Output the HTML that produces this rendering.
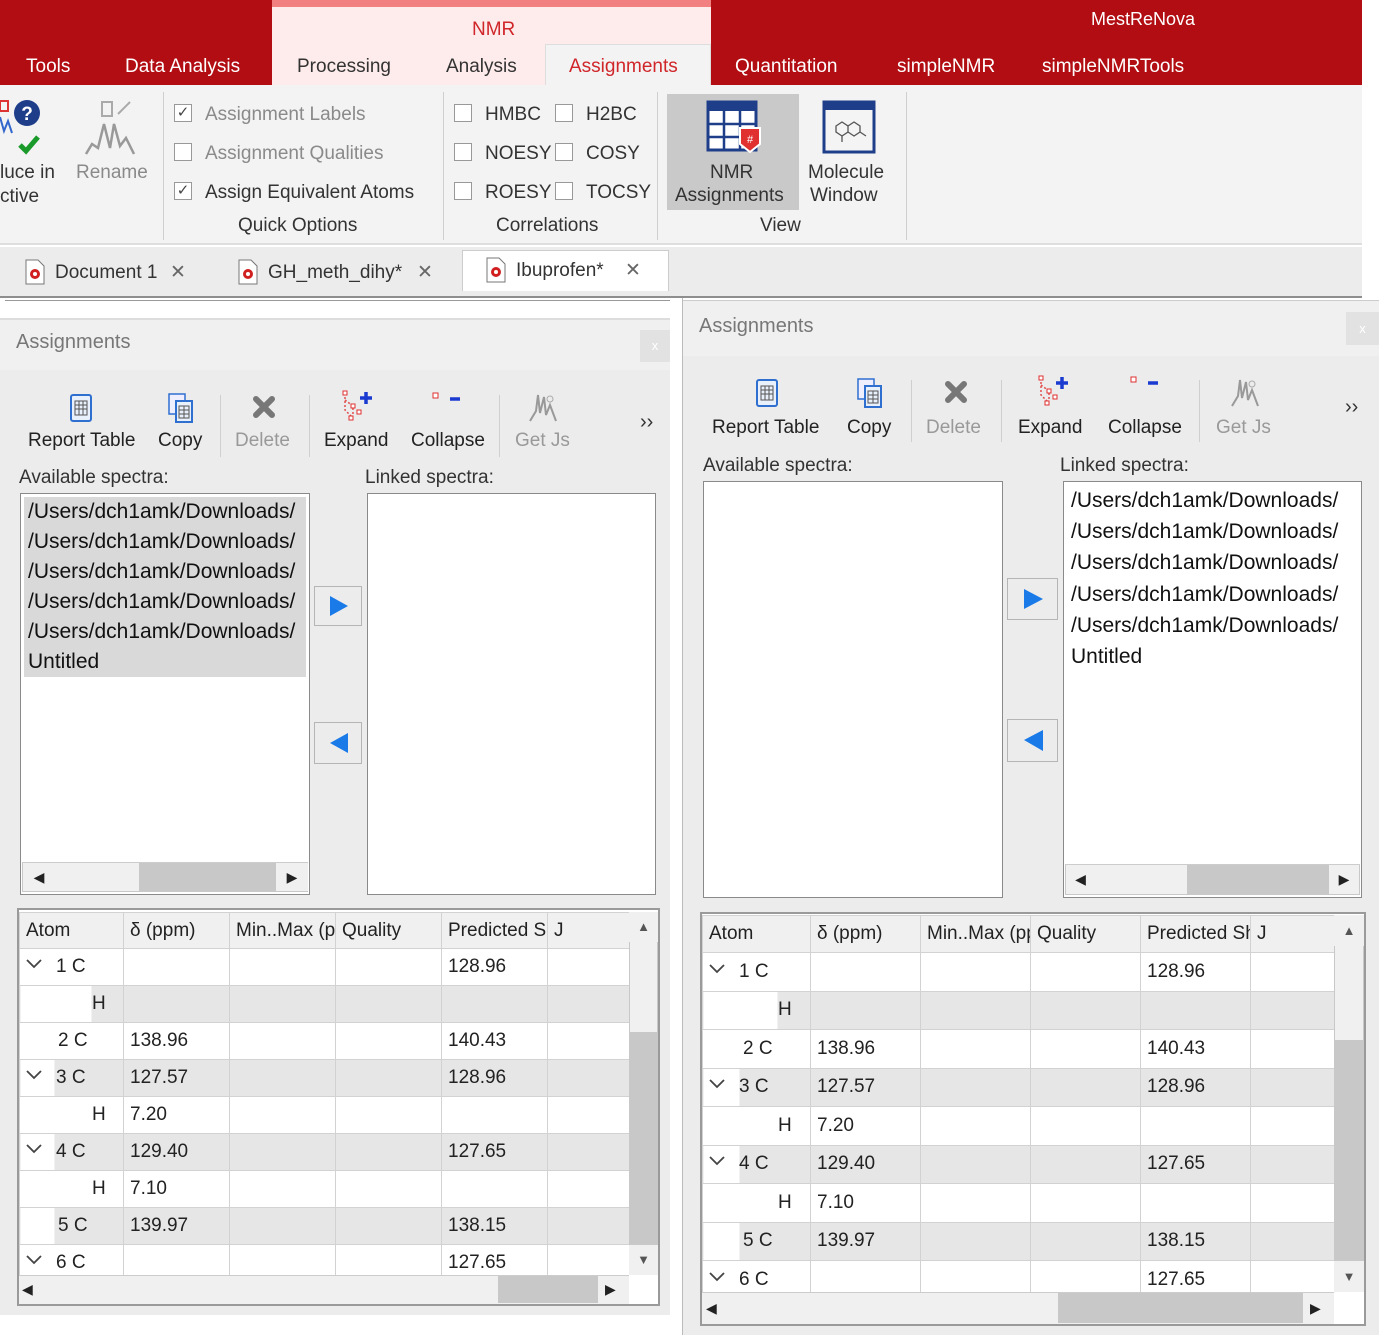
<!DOCTYPE html>
<html><head><meta charset="utf-8"><style>
*{box-sizing:border-box;margin:0;padding:0}
body{width:1379px;height:1335px;position:relative;overflow:hidden;background:#fff;font-family:"Liberation Sans",sans-serif;color:#222}
.a{position:absolute;white-space:nowrap}
.w{color:#fff;font-size:19px}
.g{color:#8a8a8a}
.cb{position:absolute;width:18px;height:18px;border:1px solid #999;background:#fff;font-size:15px;line-height:16px;text-align:center;color:#444}
.lbl{font-size:19px;line-height:22px}
.sep{position:absolute;width:1px;background:#cfcfcf}
.box{position:absolute;background:#fff;border:1px solid #8a8a8a}
.arr{position:absolute;background:#ececec;border:1px solid #b5b5b5}
table{border-collapse:collapse;table-layout:fixed;font-size:19px}
td{border:1px solid #d2d2d2;padding:0 0 0 6px;white-space:nowrap;overflow:hidden}
tr.h td{background:#f0f0f0}
tr.gr td{background:#e6e6e6}
.ch{display:inline-block;width:16px;height:10px;margin-right:14px;vertical-align:3px}
</style></head><body>

<div class="a" style="left:0;top:0;width:272px;height:85px;background:#b10d12"></div>
<div class="a" style="left:711px;top:0;width:651px;height:85px;background:#b10d12"></div>
<div class="a" style="left:272px;top:0;width:439px;height:85px;background:#fdeceb"></div>
<div class="a" style="left:272px;top:0;width:439px;height:7px;background:#f28080"></div>
<div class="a" style="left:545px;top:44px;width:166px;height:42px;background:#f3f3f3;border:1px solid #ddd;border-bottom:none"></div>
<div class="a" style="left:472px;top:19px;font-size:19px;color:#d0262a">NMR</div>
<div class="a w" style="left:1091px;top:9px;font-size:18px">MestReNova</div>
<div class="a w" style="left:26px;top:56px">Tools</div>
<div class="a w" style="left:125px;top:56px">Data Analysis</div>
<div class="a" style="left:297px;top:56px;font-size:19px;color:#333">Processing</div>
<div class="a" style="left:446px;top:56px;font-size:19px;color:#333">Analysis</div>
<div class="a" style="left:569px;top:56px;font-size:19px;color:#d0262a">Assignments</div>
<div class="a w" style="left:735px;top:56px">Quantitation</div>
<div class="a w" style="left:897px;top:56px">simpleNMR</div>
<div class="a w" style="left:1042px;top:56px">simpleNMRTools</div>

<div class="a" style="left:0;top:85px;width:1362px;height:160px;background:#f3f3f3;border-bottom:2px solid #dedede"></div>
<div class="sep" style="left:163px;top:92px;height:148px"></div>
<div class="sep" style="left:443px;top:92px;height:148px"></div>
<div class="sep" style="left:657px;top:92px;height:148px"></div>
<div class="sep" style="left:906px;top:92px;height:148px"></div>
<svg class="a" style="left:0;top:97px" width="44" height="62" viewBox="0 0 44 62"><rect x="0" y="4" width="8" height="10" fill="none" stroke="#d33" stroke-width="2"/><path d="M0 20 L4 34 L8 24 L12 36" stroke="#36c" stroke-width="2" fill="none"/><circle cx="27" cy="16" r="13" fill="#1e3e8a"/><text x="27" y="23" font-size="19" font-weight="bold" fill="#fff" text-anchor="middle" font-family="Liberation Sans">?</text><path d="M20 48 L26 54 L38 40" stroke="#1a9a2a" stroke-width="5" fill="none"/></svg>
<div class="a lbl" style="left:0;top:162px;color:#333">luce in</div>
<div class="a lbl" style="left:0;top:186px;color:#333">ctive</div>
<svg class="a" style="left:84px;top:98px" width="56" height="60" viewBox="0 0 56 60"><rect x="18" y="4" width="10" height="14" fill="none" stroke="#aaa" stroke-width="2"/><path d="M34 16 L46 4" stroke="#aaa" stroke-width="2"/><path d="M2 56 L8 46 L14 50 L20 26 L26 50 L30 26 L36 48 L42 40 L50 56" stroke="#999" stroke-width="2.5" fill="none"/></svg>
<div class="a lbl g" style="left:76px;top:162px">Rename</div>

<div class="cb" style="left:174px;top:104px">✓</div><div class="a lbl g" style="left:205px;top:104px">Assignment Labels</div>
<div class="cb" style="left:174px;top:143px"></div><div class="a lbl g" style="left:205px;top:143px">Assignment Qualities</div>
<div class="cb" style="left:174px;top:182px">✓</div><div class="a lbl" style="left:205px;top:182px;color:#333">Assign Equivalent Atoms</div>
<div class="a lbl" style="left:238px;top:215px;color:#333">Quick Options</div>

<div class="cb" style="left:454px;top:104px"></div><div class="a lbl" style="left:485px;top:104px;color:#333">HMBC</div>
<div class="cb" style="left:555px;top:104px"></div><div class="a lbl" style="left:586px;top:104px;color:#333">H2BC</div>
<div class="cb" style="left:454px;top:143px"></div><div class="a lbl" style="left:485px;top:143px;color:#333">NOESY</div>
<div class="cb" style="left:555px;top:143px"></div><div class="a lbl" style="left:586px;top:143px;color:#333">COSY</div>
<div class="cb" style="left:454px;top:182px"></div><div class="a lbl" style="left:485px;top:182px;color:#333">ROESY</div>
<div class="cb" style="left:555px;top:182px"></div><div class="a lbl" style="left:586px;top:182px;color:#333">TOCSY</div>
<div class="a lbl" style="left:496px;top:215px;color:#333">Correlations</div>

<div class="a" style="left:667px;top:94px;width:132px;height:116px;background:#c9c9c9"></div>
<svg class="a" style="left:706px;top:100px" width="56" height="56" viewBox="0 0 56 56"><rect x="2" y="2" width="48" height="48" fill="#fff" stroke="#1e3e8a" stroke-width="3"/><rect x="2" y="2" width="48" height="9" fill="#1e3e8a"/><path d="M2 24 H50 M2 37 H50 M18 11 V50 M34 11 V50" stroke="#1e3e8a" stroke-width="2.5"/><path d="M34 28 H54 V44 L44 52 L34 44Z" fill="#e03030" stroke="#fff" stroke-width="2"/><text x="44" y="43" font-size="11" fill="#fff" text-anchor="middle" font-family="Liberation Sans">#</text></svg>
<div class="a lbl" style="left:710px;top:162px;color:#333">NMR</div>
<div class="a lbl" style="left:675px;top:185px;color:#333">Assignments</div>
<svg class="a" style="left:822px;top:100px" width="54" height="56" viewBox="0 0 54 56"><rect x="2" y="2" width="50" height="50" fill="#f4f4f4" stroke="#1e3e8a" stroke-width="3"/><rect x="2" y="2" width="50" height="8" fill="#1e3e8a"/><path d="M14 26 L20 22 L26 26 L26 32 L20 36 L14 32Z M26 26 L32 22 L38 26 L38 32 L32 36 L26 32 M20 36 V42 M38 32 L44 36" stroke="#555" stroke-width="1.3" fill="none"/></svg>
<div class="a lbl" style="left:808px;top:162px;color:#333">Molecule</div>
<div class="a lbl" style="left:810px;top:185px;color:#333">Window</div>
<div class="a lbl" style="left:760px;top:215px;color:#333">View</div>

<div class="a" style="left:0;top:247px;width:1362px;height:51px;background:#ececec;border-bottom:2px solid #8e8e8e"></div>
<div class="a" style="left:462px;top:250px;width:207px;height:41px;background:#fff;border:1px solid #ccc;border-bottom:none"></div>
<svg class="a" style="left:25px;top:259px" width="20" height="26" viewBox="0 0 20 26"><path d="M1 1 H13 L19 7 V25 H1Z" fill="#fff" stroke="#777"/><circle cx="10" cy="15" r="5" fill="#d02020"/><circle cx="10" cy="15" r="2" fill="#fff"/></svg>
<div class="a lbl" style="left:55px;top:262px;color:#333">Document 1</div><div class="a lbl" style="left:170px;top:262px;color:#666">✕</div>
<svg class="a" style="left:238px;top:259px" width="20" height="26" viewBox="0 0 20 26"><path d="M1 1 H13 L19 7 V25 H1Z" fill="#fff" stroke="#777"/><circle cx="10" cy="15" r="5" fill="#d02020"/><circle cx="10" cy="15" r="2" fill="#fff"/></svg>
<div class="a lbl" style="left:268px;top:262px;color:#333">GH_meth_dihy*</div><div class="a lbl" style="left:417px;top:262px;color:#666">✕</div>
<svg class="a" style="left:486px;top:257px" width="20" height="26" viewBox="0 0 20 26"><path d="M1 1 H13 L19 7 V25 H1Z" fill="#fff" stroke="#777"/><circle cx="10" cy="15" r="5" fill="#d02020"/><circle cx="10" cy="15" r="2" fill="#fff"/></svg>
<div class="a lbl" style="left:516px;top:260px;color:#333">Ibuprofen*</div><div class="a lbl" style="left:625px;top:260px;color:#666">✕</div>
<div class="a" style="left:5px;top:300px;width:665px;height:18px;background:#fff;border-top:1px solid #999"></div>

<!-- LEFT PANEL -->
<div class="a" style="left:0;top:318px;width:670px;height:997px;background:#f0f0f0;border-top:2px solid #ddd"></div>
<div class="a" style="left:0;top:370px;width:670px;height:945px;background:#ececec"></div>
<div class="a" style="left:16px;top:331px;font-size:20px;color:#777">Assignments</div>
<div class="a" style="left:640px;top:330px;width:30px;height:32px;background:#e2e2e2;color:#fff;font-size:13px;text-align:center;line-height:32px">x</div>

<svg class="a" style="left:67px;top:393px" width="28" height="30" viewBox="0 0 28 30"><rect x="4" y="2" width="20" height="26" rx="2" fill="#e8f0fb" stroke="#2e6fd0" stroke-width="2"/><path d="M8 8 H20 V22 H8Z M8 12 H20 M8 16 H20 M12 8 V22 M16 8 V22" stroke="#555" stroke-width="1" fill="none"/></svg>
<div class="a lbl" style="left:28px;top:430px">Report Table</div>
<svg class="a" style="left:167px;top:392px" width="28" height="32" viewBox="0 0 28 32"><rect x="2" y="2" width="16" height="20" fill="#eef" stroke="#2e6fd0" stroke-width="1.5"/><rect x="9" y="9" width="16" height="21" fill="#e8f0fb" stroke="#2e6fd0" stroke-width="2"/><path d="M12 14 H22 V26 H12Z M12 18 H22 M12 22 H22 M17 14 V26" stroke="#555" stroke-width="1" fill="none"/></svg>
<div class="a lbl" style="left:158px;top:430px">Copy</div>
<div class="sep" style="left:220px;top:395px;height:62px"></div>
<svg class="a" style="left:252px;top:395px" width="24" height="24" viewBox="0 0 24 24"><path d="M4 4 L20 20 M20 4 L4 20" stroke="#777" stroke-width="6" stroke-linecap="round"/></svg>
<div class="a lbl g" style="left:235px;top:430px;color:#999">Delete</div>
<div class="sep" style="left:309px;top:395px;height:62px"></div>
<svg class="a" style="left:342px;top:390px" width="32" height="34" viewBox="0 0 32 34"><path d="M3 3 V20 L9 26 M3 10 L11 16 L11 24" stroke="#e05050" stroke-width="1.5" stroke-dasharray="2 2" fill="none"/><rect x="1" y="1" width="4" height="4" fill="#fff" stroke="#e03030"/><rect x="9" y="14" width="4" height="4" fill="#fff" stroke="#e03030"/><rect x="7" y="26" width="4" height="4" fill="#fff" stroke="#e03030"/><rect x="15" y="20" width="4" height="4" fill="#fff" stroke="#e03030"/><path d="M24 2 V14 M18 8 H30" stroke="#1a3ad0" stroke-width="3.5"/></svg>
<div class="a lbl" style="left:324px;top:430px">Expand</div>
<svg class="a" style="left:432px;top:392px" width="30" height="20" viewBox="0 0 30 20"><rect x="1" y="1" width="5" height="5" fill="#fff" stroke="#e03030"/><path d="M18 7 H28" stroke="#1a3ad0" stroke-width="3.5"/></svg>
<div class="a lbl" style="left:411px;top:430px">Collapse</div>
<div class="sep" style="left:499px;top:395px;height:62px"></div>
<svg class="a" style="left:528px;top:391px" width="30" height="32" viewBox="0 0 30 32"><path d="M2 30 L8 20 L10 4 L12 22 L16 6 L18 24 L22 14 L28 30" stroke="#999" stroke-width="2" fill="none"/><circle cx="22" cy="8" r="3" fill="none" stroke="#aaa"/></svg>
<div class="a lbl" style="left:515px;top:430px;color:#999">Get Js</div>
<div class="a" style="left:640px;top:411px;font-size:20px;color:#333">››</div>

<div class="a lbl" style="left:19px;top:467px;color:#333">Available spectra:</div>
<div class="a lbl" style="left:365px;top:467px;color:#333">Linked spectra:</div>
<div class="box" style="left:20px;top:493px;width:290px;height:402px"></div>
<div class="a" style="left:24px;top:497px;width:282px;height:180px;background:#d9d9d9"></div>
<div class="a" style="left:28px;top:497px;font-size:21px;line-height:30px;color:#111">/Users/dch1amk/Downloads/<br>/Users/dch1amk/Downloads/<br>/Users/dch1amk/Downloads/<br>/Users/dch1amk/Downloads/<br>/Users/dch1amk/Downloads/<br>Untitled</div>
<div class="a" style="left:22px;top:862px;width:286px;height:30px;background:#c8c8c8;border-top:1px solid #ccc"></div>
<div class="a" style="left:55px;top:863px;width:84px;height:28px;background:#f0f0f0"></div>
<div class="a" style="left:23px;top:863px;width:32px;height:28px;background:#f0f0f0;font-size:14px;text-align:center;line-height:28px">◀</div>
<div class="a" style="left:276px;top:863px;width:32px;height:28px;background:#f0f0f0;font-size:14px;text-align:center;line-height:28px">▶</div>
<div class="arr" style="left:314px;top:586px;width:48px;height:40px"><svg width="46" height="38"><path d="M15 9 L33 19 L15 29Z" fill="#1a7ae8"/></svg></div>
<div class="arr" style="left:314px;top:722px;width:48px;height:42px"><svg width="46" height="40"><path d="M33 10 L15 20 L33 30Z" fill="#1a7ae8"/></svg></div>
<div class="box" style="left:367px;top:493px;width:289px;height:402px"></div>

<div class="a" style="left:17px;top:908px;width:643px;height:398px;border:2px solid #9a9a9a;background:#fff"></div>
<div class="a" style="left:19px;top:912px;width:610px;height:363px;overflow:hidden">
<table style="width:612px">
<colgroup><col style="width:104px"><col style="width:106px"><col style="width:106px"><col style="width:106px"><col style="width:106px"><col style="width:84px"></colgroup>
<tr class="h" style="height:36px"><td>Atom</td><td>δ (ppm)</td><td>Min..Max (ppm)</td><td>Quality</td><td>Predicted Shift</td><td>J</td></tr>
<tr style="height:37px"><td><svg class="ch" viewBox="0 0 16 10"><path d="M1 1 L8 8 L15 1" stroke="#444" stroke-width="1.8" fill="none"/></svg>1 C</td><td></td><td></td><td></td><td>128.96</td><td></td></tr>
<tr class="gr" style="height:37px"><td style="background:linear-gradient(90deg,#fff 71px,#e6e6e6 71px);padding-left:72px">H</td><td></td><td></td><td></td><td></td><td></td></tr>
<tr style="height:37px"><td style="padding-left:38px">2 C</td><td>138.96</td><td></td><td></td><td>140.43</td><td></td></tr>
<tr class="gr" style="height:37px"><td style="background:linear-gradient(90deg,#fff 34px,#e6e6e6 34px)"><svg class="ch" viewBox="0 0 16 10"><path d="M1 1 L8 8 L15 1" stroke="#444" stroke-width="1.8" fill="none"/></svg>3 C</td><td>127.57</td><td></td><td></td><td>128.96</td><td></td></tr>
<tr style="height:37px"><td style="padding-left:72px">H</td><td>7.20</td><td></td><td></td><td></td><td></td></tr>
<tr class="gr" style="height:37px"><td style="background:linear-gradient(90deg,#fff 34px,#e6e6e6 34px)"><svg class="ch" viewBox="0 0 16 10"><path d="M1 1 L8 8 L15 1" stroke="#444" stroke-width="1.8" fill="none"/></svg>4 C</td><td>129.40</td><td></td><td></td><td>127.65</td><td></td></tr>
<tr style="height:37px"><td style="padding-left:72px">H</td><td>7.10</td><td></td><td></td><td></td><td></td></tr>
<tr class="gr" style="height:37px"><td style="background:linear-gradient(90deg,#fff 34px,#e6e6e6 34px);padding-left:38px">5 C</td><td>139.97</td><td></td><td></td><td>138.15</td><td></td></tr>
<tr style="height:37px"><td><svg class="ch" viewBox="0 0 16 10"><path d="M1 1 L8 8 L15 1" stroke="#444" stroke-width="1.8" fill="none"/></svg>6 C</td><td></td><td></td><td></td><td>127.65</td><td></td></tr>
</table></div>
<div class="a" style="left:629px;top:912px;width:29px;height:363px;background:#c8c8c8"></div>
<div class="a" style="left:630px;top:942px;width:27px;height:90px;background:#f0f0f0"></div>
<div class="a" style="left:629px;top:912px;width:29px;height:30px;background:#f0f0f0;font-size:13px;text-align:center;line-height:30px;color:#555">▲</div>
<div class="a" style="left:629px;top:1245px;width:29px;height:30px;background:#f0f0f0;font-size:13px;text-align:center;line-height:30px;color:#555">▼</div>
<div class="a" style="left:19px;top:1275px;width:610px;height:29px;background:#f0f0f0;border-top:1px solid #ccc"></div>
<div class="a" style="left:498px;top:1276px;width:100px;height:27px;background:#c8c8c8"></div>
<div class="a" style="left:22px;top:1276px;font-size:14px;line-height:27px">◀</div>
<div class="a" style="left:605px;top:1276px;font-size:14px;line-height:27px">▶</div>

<!-- RIGHT PANEL -->
<div class="a" style="left:680px;top:298px;width:3px;height:1037px;background:#fff;border-right:1px solid #bbb"></div>
<div class="a" style="left:683px;top:300px;width:696px;height:1035px;background:#f0f0f0;border-top:1px solid #ccc"></div>
<div class="a" style="left:683px;top:356px;width:696px;height:979px;background:#ececec"></div>
<div class="a" style="left:699px;top:315px;font-size:20px;color:#777">Assignments</div>
<div class="a" style="left:1346px;top:312px;width:33px;height:33px;background:#e2e2e2;color:#fff;font-size:13px;text-align:center;line-height:33px">x</div>

<svg class="a" style="left:753px;top:378px" width="28" height="30" viewBox="0 0 28 30"><rect x="4" y="2" width="20" height="26" rx="2" fill="#e8f0fb" stroke="#2e6fd0" stroke-width="2"/><path d="M8 8 H20 V22 H8Z M8 12 H20 M8 16 H20 M12 8 V22 M16 8 V22" stroke="#555" stroke-width="1" fill="none"/></svg>
<div class="a lbl" style="left:712px;top:417px">Report Table</div>
<svg class="a" style="left:856px;top:377px" width="28" height="32" viewBox="0 0 28 32"><rect x="2" y="2" width="16" height="20" fill="#eef" stroke="#2e6fd0" stroke-width="1.5"/><rect x="9" y="9" width="16" height="21" fill="#e8f0fb" stroke="#2e6fd0" stroke-width="2"/><path d="M12 14 H22 V26 H12Z M12 18 H22 M12 22 H22 M17 14 V26" stroke="#555" stroke-width="1" fill="none"/></svg>
<div class="a lbl" style="left:847px;top:417px">Copy</div>
<div class="sep" style="left:911px;top:380px;height:62px"></div>
<svg class="a" style="left:944px;top:380px" width="24" height="24" viewBox="0 0 24 24"><path d="M4 4 L20 20 M20 4 L4 20" stroke="#777" stroke-width="6" stroke-linecap="round"/></svg>
<div class="a lbl" style="left:926px;top:417px;color:#999">Delete</div>
<div class="sep" style="left:1001px;top:380px;height:62px"></div>
<svg class="a" style="left:1038px;top:375px" width="32" height="34" viewBox="0 0 32 34"><path d="M3 3 V20 L9 26 M3 10 L11 16 L11 24" stroke="#e05050" stroke-width="1.5" stroke-dasharray="2 2" fill="none"/><rect x="1" y="1" width="4" height="4" fill="#fff" stroke="#e03030"/><rect x="9" y="14" width="4" height="4" fill="#fff" stroke="#e03030"/><rect x="7" y="26" width="4" height="4" fill="#fff" stroke="#e03030"/><rect x="15" y="20" width="4" height="4" fill="#fff" stroke="#e03030"/><path d="M24 2 V14 M18 8 H30" stroke="#1a3ad0" stroke-width="3.5"/></svg>
<div class="a lbl" style="left:1018px;top:417px">Expand</div>
<svg class="a" style="left:1130px;top:376px" width="30" height="20" viewBox="0 0 30 20"><rect x="1" y="1" width="5" height="5" fill="#fff" stroke="#e03030"/><path d="M18 7 H28" stroke="#1a3ad0" stroke-width="3.5"/></svg>
<div class="a lbl" style="left:1108px;top:417px">Collapse</div>
<div class="sep" style="left:1199px;top:380px;height:62px"></div>
<svg class="a" style="left:1230px;top:376px" width="30" height="32" viewBox="0 0 30 32"><path d="M2 30 L8 20 L10 4 L12 22 L16 6 L18 24 L22 14 L28 30" stroke="#999" stroke-width="2" fill="none"/><circle cx="22" cy="8" r="3" fill="none" stroke="#aaa"/></svg>
<div class="a lbl" style="left:1216px;top:417px;color:#999">Get Js</div>
<div class="a" style="left:1345px;top:396px;font-size:20px;color:#333">››</div>

<div class="a lbl" style="left:703px;top:455px;color:#333">Available spectra:</div>
<div class="a lbl" style="left:1060px;top:455px;color:#333">Linked spectra:</div>
<div class="box" style="left:703px;top:481px;width:300px;height:417px"></div>
<div class="arr" style="left:1007px;top:578px;width:51px;height:42px"><svg width="49" height="40"><path d="M16 10 L35 20 L16 30Z" fill="#1a7ae8"/></svg></div>
<div class="arr" style="left:1007px;top:719px;width:51px;height:43px"><svg width="49" height="41"><path d="M35 10 L16 20 L35 31Z" fill="#1a7ae8"/></svg></div>
<div class="box" style="left:1063px;top:481px;width:299px;height:417px"></div>
<div class="a" style="left:1071px;top:485px;font-size:21px;line-height:31.2px;color:#111">/Users/dch1amk/Downloads/<br>/Users/dch1amk/Downloads/<br>/Users/dch1amk/Downloads/<br>/Users/dch1amk/Downloads/<br>/Users/dch1amk/Downloads/<br>Untitled</div>
<div class="a" style="left:1065px;top:864px;width:295px;height:31px;background:#c8c8c8;border-top:1px solid #ccc"></div>
<div class="a" style="left:1095px;top:865px;width:92px;height:29px;background:#f0f0f0"></div>
<div class="a" style="left:1066px;top:865px;width:29px;height:29px;background:#f0f0f0;font-size:14px;text-align:center;line-height:29px">◀</div>
<div class="a" style="left:1329px;top:865px;width:30px;height:29px;background:#f0f0f0;font-size:14px;text-align:center;line-height:29px">▶</div>

<div class="a" style="left:700px;top:912px;width:666px;height:414px;border:2px solid #9a9a9a;background:#fff"></div>
<div class="a" style="left:702px;top:915px;width:632px;height:377px;overflow:hidden">
<table style="width:634px">
<colgroup><col style="width:108px"><col style="width:110px"><col style="width:110px"><col style="width:110px"><col style="width:110px"><col style="width:86px"></colgroup>
<tr class="h" style="height:37px"><td>Atom</td><td>δ (ppm)</td><td>Min..Max (ppm)</td><td>Quality</td><td>Predicted Shift</td><td>J</td></tr>
<tr style="height:38.5px"><td><svg class="ch" viewBox="0 0 16 10"><path d="M1 1 L8 8 L15 1" stroke="#444" stroke-width="1.8" fill="none"/></svg>1 C</td><td></td><td></td><td></td><td>128.96</td><td></td></tr>
<tr class="gr" style="height:38.5px"><td style="background:linear-gradient(90deg,#fff 74px,#e6e6e6 74px);padding-left:75px">H</td><td></td><td></td><td></td><td></td><td></td></tr>
<tr style="height:38.5px"><td style="padding-left:40px">2 C</td><td>138.96</td><td></td><td></td><td>140.43</td><td></td></tr>
<tr class="gr" style="height:38.5px"><td style="background:linear-gradient(90deg,#fff 36px,#e6e6e6 36px)"><svg class="ch" viewBox="0 0 16 10"><path d="M1 1 L8 8 L15 1" stroke="#444" stroke-width="1.8" fill="none"/></svg>3 C</td><td>127.57</td><td></td><td></td><td>128.96</td><td></td></tr>
<tr style="height:38.5px"><td style="padding-left:75px">H</td><td>7.20</td><td></td><td></td><td></td><td></td></tr>
<tr class="gr" style="height:38.5px"><td style="background:linear-gradient(90deg,#fff 36px,#e6e6e6 36px)"><svg class="ch" viewBox="0 0 16 10"><path d="M1 1 L8 8 L15 1" stroke="#444" stroke-width="1.8" fill="none"/></svg>4 C</td><td>129.40</td><td></td><td></td><td>127.65</td><td></td></tr>
<tr style="height:38.5px"><td style="padding-left:75px">H</td><td>7.10</td><td></td><td></td><td></td><td></td></tr>
<tr class="gr" style="height:38.5px"><td style="background:linear-gradient(90deg,#fff 36px,#e6e6e6 36px);padding-left:40px">5 C</td><td>139.97</td><td></td><td></td><td>138.15</td><td></td></tr>
<tr style="height:38.5px"><td><svg class="ch" viewBox="0 0 16 10"><path d="M1 1 L8 8 L15 1" stroke="#444" stroke-width="1.8" fill="none"/></svg>6 C</td><td></td><td></td><td></td><td>127.65</td><td></td></tr>
</table></div>
<div class="a" style="left:1334px;top:915px;width:30px;height:377px;background:#c8c8c8"></div>
<div class="a" style="left:1335px;top:946px;width:28px;height:94px;background:#f0f0f0"></div>
<div class="a" style="left:1334px;top:915px;width:30px;height:31px;background:#f0f0f0;font-size:13px;text-align:center;line-height:31px;color:#555">▲</div>
<div class="a" style="left:1334px;top:1261px;width:30px;height:31px;background:#f0f0f0;font-size:13px;text-align:center;line-height:31px;color:#555">▼</div>
<div class="a" style="left:702px;top:1292px;width:632px;height:32px;background:#f0f0f0;border-top:1px solid #ccc"></div>
<div class="a" style="left:1058px;top:1293px;width:245px;height:30px;background:#c8c8c8"></div>
<div class="a" style="left:706px;top:1293px;font-size:14px;line-height:30px">◀</div>
<div class="a" style="left:1310px;top:1293px;font-size:14px;line-height:30px">▶</div>
</body></html>
